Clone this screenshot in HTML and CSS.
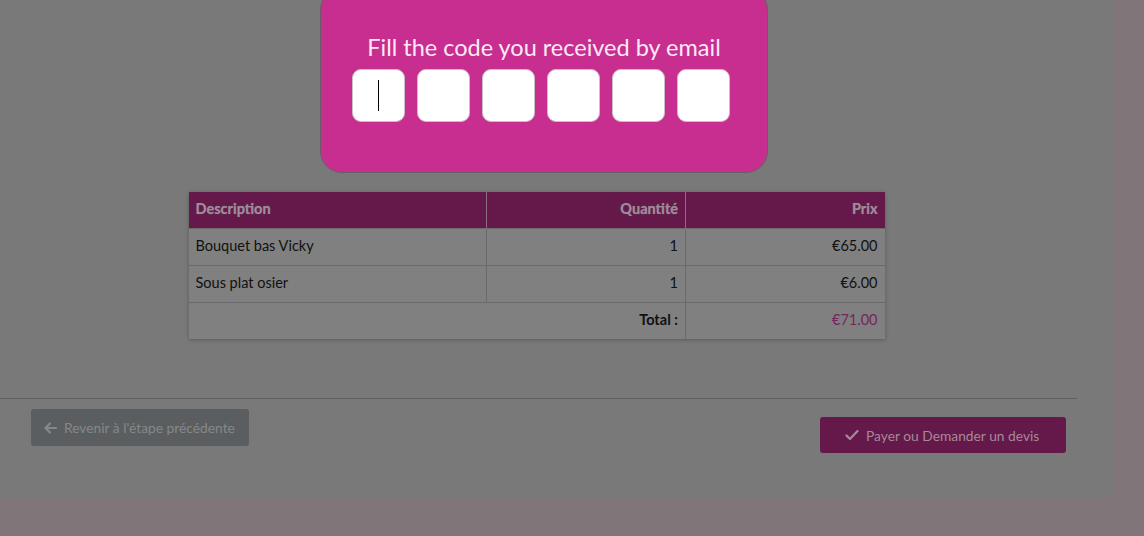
FILE: index.html
```html
<!DOCTYPE html>
<html>
<head>
<meta charset="utf-8">
<link rel="stylesheet" href="styles.css">
</head>
<body>
<div class="page">
  <div class="content">
    <table class="cart">
      <colgroup><col class="w1"><col class="w2"><col class="w3"></colgroup>
      <thead>
        <tr><th>Description</th><th class="num">Quantité</th><th class="num">Prix</th></tr>
      </thead>
      <tbody>
        <tr><td>Bouquet bas Vicky</td><td class="num">1</td><td class="num">€65.00</td></tr>
        <tr><td>Sous plat osier</td><td class="num">1</td><td class="num">€6.00</td></tr>
        <tr class="total"><td colspan="2" class="num"><b>Total :</b></td><td class="num price">€71.00</td></tr>
      </tbody>
    </table>
  </div>
  <div class="footer">
    <button class="btn btn-back"><svg width="13" height="12" viewBox="0 0 13 12"><path d="M6 1.5 1.5 6 6 10.5M1.8 6H12" fill="none" stroke="currentColor" stroke-width="2.2" stroke-linecap="round" stroke-linejoin="round"/></svg>Revenir à l'étape précédente</button>
    <button class="btn btn-pay"><svg width="14" height="12" viewBox="0 0 14 12"><path d="M1.5 6.5 5 10 12.5 2" fill="none" stroke="currentColor" stroke-width="2.2" stroke-linecap="round" stroke-linejoin="round"/></svg>Payer ou Demander un devis</button>
  </div>
</div>
<div class="modal">
  <div class="modal-title">Fill the code you received by email</div>
  <div class="codes">
    <div class="code focus"><span class="caret"></span></div>
    <div class="code"></div>
    <div class="code"></div>
    <div class="code"></div>
    <div class="code"></div>
    <div class="code"></div>
  </div>
</div>
</body>
</html>
```
FILE: styles.css
```css
html, body {
  margin: 0;
  padding: 0;
}
body {
  background: #807679;
  font-family: "Lato", "Open Sans", sans-serif;
  width: 1144px;
  height: 536px;
  overflow: hidden;
  position: relative;
}
.page {
  width: 1113px;
  height: 498px;
  background: #787978;
  box-sizing: border-box;
  padding-top: 192px;
}
.content {
  width: 1077px;
  height: 206px;
  border-bottom: 1px solid #5f6060;
  display: flex;
  justify-content: center;
  align-items: flex-start;
}
.cart {
  border-collapse: collapse;
  table-layout: fixed;
  width: 696px;
  margin-left: -4px;
  background: #808080;
  box-shadow: 0 1px 4px rgba(0,0,0,0.25);
  font-size: 14.5px;
  color: #111;
}
.cart col.w1 { width: 298px; }
.cart col.w2 { width: 199px; }
.cart col.w3 { width: 199px; }
.cart th {
  background: #65184a;
  color: #9c8e98;
  font-weight: bold;
  text-align: left;
  height: 34px;
  line-height: 18px;
  padding: 0 7px 2px;
  border-left: 1px solid #8d6c81;
  text-shadow: 0 0 1px rgba(160,150,160,0.6);
}
.cart th:first-child { border-left: none; }
.cart td {
  height: 33px;
  line-height: 18px;
  padding: 0 7px 3px;
  border-top: 1px solid #6a6a6a;
  border-left: 1px solid #6a6a6a;
}
.cart tr td:first-child { border-left: none; }
.cart .num { text-align: right; }
.cart .price { color: #74265e; }
.footer {
  width: 1077px;
  display: flex;
  justify-content: space-between;
  align-items: flex-start;
  padding: 10px 11px 0 31px;
  box-sizing: border-box;
}
.btn {
  border: none;
  font-family: inherit;
  font-size: 13.8px;
  border-radius: 3px;
  display: flex;
  align-items: center;
  gap: 7px;
  cursor: pointer;
}
.btn-back {
  background: #5b5e60;
  color: #85888a;
  width: 218px;
  height: 37px;
  padding: 0 13px;
}
.btn-pay {
  background: #65184a;
  color: #a6899b;
  width: 246px;
  height: 36px;
  margin-top: 8px;
  padding: 0 0 0 25px;
}
.modal {
  position: absolute;
  left: 320px;
  top: -12px;
  width: 448px;
  height: 185px;
  box-sizing: border-box;
  background: #c82e8f;
  border: 1px solid #6a5c66;
  border-radius: 22px;
  display: flex;
  flex-direction: column;
  align-items: center;
  padding-top: 43px;
}
.modal-title {
  color: #fbeaf5;
  font-size: 23.5px;
  line-height: 30px;
}
.codes {
  display: flex;
  gap: 12px;
  margin-top: 7px;
  margin-left: -6px;
}
.code {
  width: 53px;
  height: 53px;
  box-sizing: border-box;
  background: #fff;
  border: 1px solid #c9c0c6;
  border-radius: 9px;
  display: flex;
  justify-content: center;
  align-items: center;
}
.caret {
  width: 1px;
  height: 31px;
  background: #000;
}
```
